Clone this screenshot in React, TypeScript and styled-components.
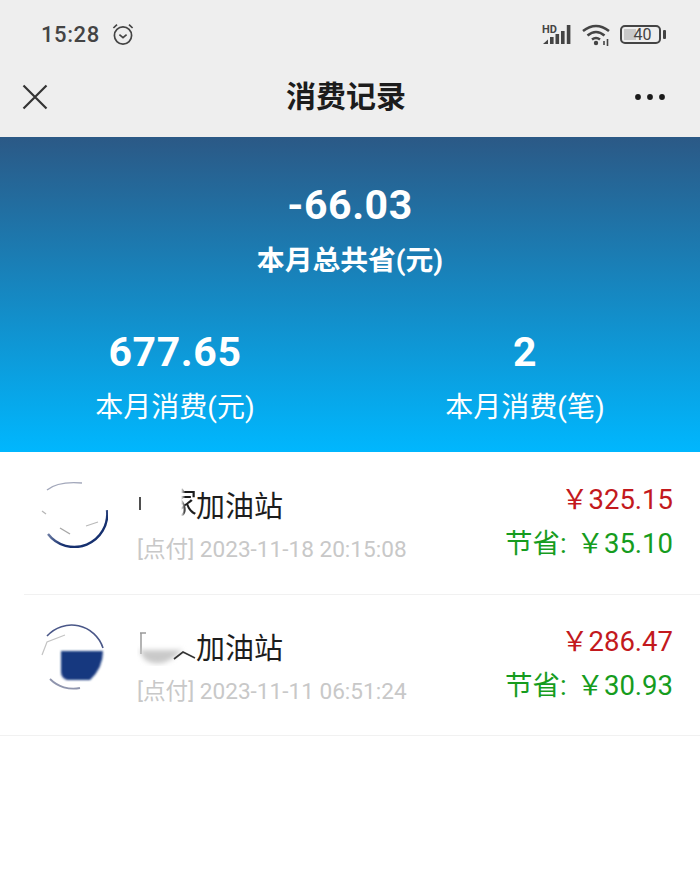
import React from "react";
import styled, { createGlobalStyle } from "styled-components";

const GlobalStyle = createGlobalStyle`
  html, body {
    margin: 0;
    padding: 0;
    background: #fff;
  }
  body {
    font-family: Roboto, "Noto Sans CJK SC", sans-serif;
  }
`;

const Page = styled.div`
  width: 700px;
  height: 896px;
  overflow: hidden;
  background: #fff;
`;

const TopArea = styled.header`
  height: 137px;
  background: #eeeeee;
  display: flex;
  flex-direction: column;
`;

const StatusBar = styled.div`
  height: 68px;
  padding: 0 39px 0 41px;
  display: flex;
  align-items: center;
  justify-content: space-between;
`;

const StatusGroup = styled.div<{ $gap: number }>`
  display: flex;
  align-items: center;
  gap: ${(p) => p.$gap}px;
`;

const Clock = styled.span`
  font-size: 22px;
  font-weight: 500;
  letter-spacing: 0.6px;
  color: #444;
`;

const BatteryBox = styled.div`
  position: relative;
  width: 41px;
  height: 19px;
  box-sizing: border-box;
  border: 2px solid #444;
  border-radius: 5px;
  font-size: 16px;
  line-height: 15px;
  color: #444;
  text-align: center;
  padding-left: 4px;
  background: linear-gradient(to right, #c9c9c9 0 35%, transparent 35%) 2px 2px / 33px 11px no-repeat;

  &::after {
    content: "";
    position: absolute;
    right: -7px;
    top: 3px;
    width: 3px;
    height: 9px;
    border-radius: 1px;
    background: #444;
  }
`;

const NavBar = styled.div`
  flex: 1;
  display: grid;
  grid-template-columns: 1fr auto 1fr;
  align-items: center;
  padding: 0 8px 12px 0;

  & > svg:first-child {
    margin-left: 22px;
  }
  & > svg:last-child {
    justify-self: end;
    margin-right: 25px;
  }
`;

const NavTitle = styled.h1`
  margin: 0;
  font-size: 30px;
  font-weight: 700;
  color: #1c1c1c;
  line-height: 1;
`;

const Hero = styled.section`
  height: 315px;
  box-sizing: border-box;
  padding-top: 44px;
  background: linear-gradient(to bottom, #2b5986, #00b7fe);
  color: #fff;
  text-align: center;
`;

const HeroValue = styled.div`
  font-size: 41px;
  line-height: 48px;
  font-weight: 700;
  letter-spacing: 0.6px;
`;

const HeroTotalLabel = styled.div`
  margin-top: 12px;
  font-size: 27.8px;
  line-height: 40px;
  font-weight: 700;
`;

const HeroColumns = styled.div`
  margin-top: 47px;
  display: grid;
  grid-template-columns: 350px 350px;
`;

const HeroColumnLabel = styled.div`
  margin-top: 12px;
  font-size: 28px;
  line-height: 40px;
`;

const RecordRow = styled.div<{ $inset: number; $height: number }>`
  height: ${(p) => p.$height}px;
  box-sizing: border-box;
  margin-left: ${(p) => p.$inset}px;
  padding-left: ${(p) => 40 - p.$inset}px;
  padding-right: 27px;
  border-bottom: 1px solid #f1f1f1;
  display: flex;
  align-items: center;
`;

const LogoSlot = styled.div`
  width: 68px;
  height: 68px;
  margin-bottom: 18px;
  flex: none;
`;

const RecordMain = styled.div`
  flex: 1;
  margin-left: 29px;
  padding-top: 3px;
`;

const NameLine = styled.div`
  display: flex;
  align-items: center;
  height: 40px;
  font-size: 29px;
  color: #1d1d1d;
`;

const MaskedName = styled.span`
  position: relative;
  display: inline-block;
  width: 59px;
  height: 40px;
  flex: none;
`;

const FadedChar = styled.span`
  position: absolute;
  left: 31px;
  top: 0;
  line-height: 40px;
  -webkit-mask-image: linear-gradient(to right, transparent 45%, #000 60%);
  mask-image: linear-gradient(to right, transparent 45%, #000 60%);
`;

const DateLine = styled.div`
  margin-top: 11px;
  font-size: 22.6px;
  line-height: 30px;
  color: #c8c8c8;
  white-space: nowrap;
`;

const Amounts = styled.div`
  text-align: right;
  padding-bottom: 2px;
`;

const Amount = styled.div<{ $tone: "spend" | "save" }>`
  font-size: 27.5px;
  line-height: 44px;
  white-space: nowrap;
  word-spacing: 3px;
  color: ${(p) => (p.$tone === "spend" ? "#c3191d" : "#169c1e")};
`;

const Logo = ({ filled }: { filled?: boolean }) => (
  <svg width="68" height="68" viewBox="0 0 68 68" fill="none">
    <defs>
      <linearGradient id={filled ? "ringB" : "ringA"} x1="0" y1="0" x2="1" y2="1">
        <stop offset="0" stopColor="#d5d8e2" />
        <stop offset="0.6" stopColor="#16306f" />
        <stop offset="1" stopColor="#16306f" />
      </linearGradient>
      <filter id={filled ? "softB" : "softA"} x="-20%" y="-20%" width="140%" height="140%">
        <feGaussianBlur stdDeviation="1" />
      </filter>
    </defs>
    {filled ? (
      <>
        <path d="M7 14 A33 33 0 0 1 63 26" stroke="#4a5788" strokeWidth="1.6" />
        <path d="M10 57 A33 33 0 0 0 40 66" stroke="#8f95ad" strokeWidth="1.8" />
        <path d="M21 29 H63 Q63 46 50 58 H27 Q21 56 21 50 Z" fill="#17377f" filter="url(#softB)" />
        <path d="M2 33 L7 20 L25 13" stroke="#c4c4c4" strokeWidth="1.2" />
      </>
    ) : (
      <>
        <path d="M7 10 Q18 1 42 3" stroke="#a3a8bb" strokeWidth="1.4" />
        <path d="M67 30 A33 33 0 0 1 8 54" stroke="url(#ringA)" strokeWidth="2.4" />
        <path d="M2 31 L6 34" stroke="#b5b5b5" strokeWidth="1.2" />
        <path d="M20 48 L30 54" stroke="#a6a6a6" strokeWidth="1.4" />
        <path d="M46 46 L58 42" stroke="#b9b9b9" strokeWidth="1.2" />
      </>
    )}
  </svg>
);

const Mask = ({ second }: { second?: boolean }) => (
  <MaskedName>
    {!second && <FadedChar>家</FadedChar>}
    <svg width="59" height="40" viewBox="0 0 59 40" fill="none" style={{ position: "absolute", left: 0, top: 0 }}>
      <defs>
        <filter id="maskB" x="-30%" y="-60%" width="160%" height="220%">
          <feGaussianBlur stdDeviation="2.5" />
        </filter>
      </defs>
      {second ? (
        <>
          <path d="M3 7 H9 M4 7 V28" stroke="#9a9a9a" strokeWidth="1.5" />
          <path d="M2 24 H46 L36 32 Q22 42 8 34 Z" fill="#c9c9c9" filter="url(#maskB)" />
          <path d="M37 33 L46 26 L58 32" stroke="#333" strokeWidth="1.6" />
        </>
      ) : (
        <path d="M3 13 V26" stroke="#222" strokeWidth="1.6" />
      )}
    </svg>
  </MaskedName>
);

const records = [
  { date: "2023-11-18 20:15:08", spend: "325.15", save: "35.10", inset: 24, height: 143, filled: false },
  { date: "2023-11-11 06:51:24", spend: "286.47", save: "30.93", inset: 0, height: 141, filled: true },
];

export default function App() {
  return (
    <Page>
      <GlobalStyle />
      <TopArea>
        <StatusBar>
          <StatusGroup $gap={11}>
            <Clock>15:28</Clock>
            <svg width="24" height="24" viewBox="0 0 24 24" fill="none" stroke="#444" strokeWidth="1.7">
              <circle cx="12" cy="13.5" r="8.6" />
              <path d="M8.4 12.6 L12 15.6 L15.6 12.6" />
              <path d="M2.4 6 L6 2.6 M21.6 6 L18 2.6" />
            </svg>
          </StatusGroup>
          <StatusGroup $gap={10}>
            <svg width="30" height="21" viewBox="0 0 30 21" fill="#444">
              <text x="0" y="9" fontFamily="Roboto, sans-serif" fontSize="11" fontWeight="700">HD</text>
              <path d="M1 20 L6 15.5 V20 Z" />
              <rect x="8" y="13" width="3.6" height="7" />
              <rect x="13.5" y="10" width="3.6" height="10" />
              <rect x="19" y="7" width="3.6" height="13" />
              <rect x="24.8" y="1" width="3.6" height="19" />
            </svg>
            <svg width="28" height="23" viewBox="0 0 28 23" fill="none" stroke="#444" strokeWidth="2.6">
              <path d="M1 8 Q14 -2 27 8" />
              <path d="M5.5 12.5 Q14 5.5 22.5 12.5" />
              <path d="M10 16.5 Q14 13.5 18 16.5" />
              <circle cx="14" cy="20" r="2.2" fill="#444" stroke="none" />
              <path d="M22 18 V22 M25.5 16 V23" strokeWidth="1.6" />
            </svg>
            <BatteryBox>40</BatteryBox>
          </StatusGroup>
        </StatusBar>
        <NavBar>
          <svg width="26" height="26" viewBox="0 0 26 26" fill="none" stroke="#333" strokeWidth="2.2">
            <path d="M1.5 1.5 L24.5 24.5 M24.5 1.5 L1.5 24.5" />
          </svg>
          <NavTitle>消费记录</NavTitle>
          <svg width="32" height="6" viewBox="0 0 32 6" fill="#1a1a1a">
            <circle cx="3" cy="3" r="2.9" />
            <circle cx="15" cy="3" r="2.9" />
            <circle cx="27" cy="3" r="2.9" />
          </svg>
        </NavBar>
      </TopArea>

      <Hero>
        <HeroValue>-66.03</HeroValue>
        <HeroTotalLabel>本月总共省(元)</HeroTotalLabel>
        <HeroColumns>
          <div>
            <HeroValue>677.65</HeroValue>
            <HeroColumnLabel>本月消费(元)</HeroColumnLabel>
          </div>
          <div>
            <HeroValue>2</HeroValue>
            <HeroColumnLabel>本月消费(笔)</HeroColumnLabel>
          </div>
        </HeroColumns>
      </Hero>

      {records.map((r, i) => (
        <RecordRow key={r.date} $inset={r.inset} $height={r.height}>
          <LogoSlot>
            <Logo filled={r.filled} />
          </LogoSlot>
          <RecordMain>
            <NameLine>
              <Mask second={i === 1} />
              加油站
            </NameLine>
            <DateLine>[点付] {r.date}</DateLine>
          </RecordMain>
          <Amounts>
            <Amount $tone="spend">￥{r.spend}</Amount>
            <Amount $tone="save">节省: ￥{r.save}</Amount>
          </Amounts>
        </RecordRow>
      ))}
    </Page>
  );
}
